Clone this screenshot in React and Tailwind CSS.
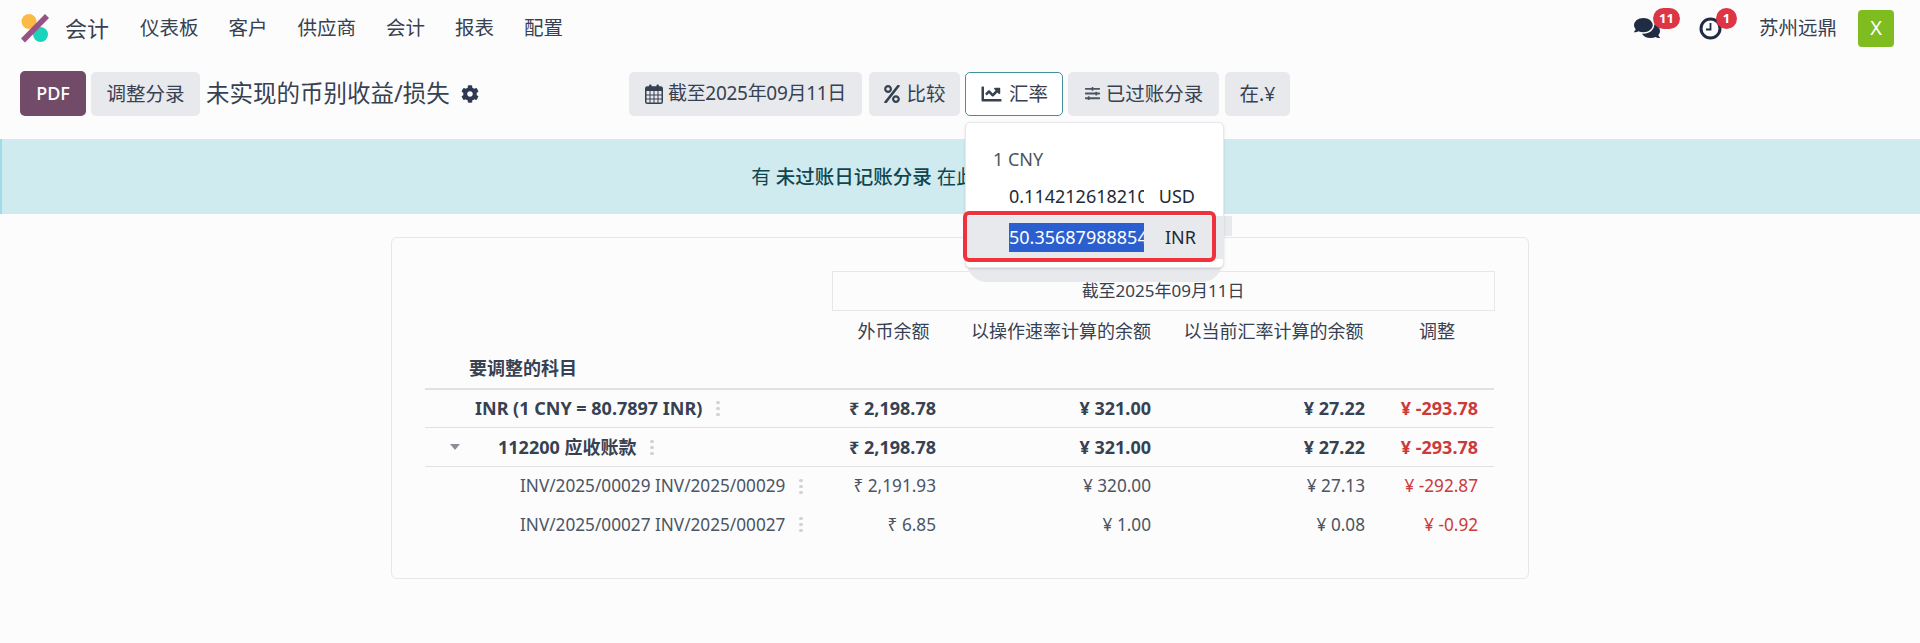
import { FaCog, FaComments, FaPercent, FaChartLine, FaSlidersH } from "react-icons/fa";

const font = { fontFamily: '"Noto Sans", "Noto Sans CJK SC", sans-serif' };

const navItems = ["仪表板", "客户", "供应商", "会计", "报表", "配置"];

const rows = [
  { label: "INR (1 CNY = 80.7897 INR)", fc: "₹ 2,198.78", op: "¥ 321.00", cur: "¥ 27.22", adj: "¥ -293.78", bold: true, pad: "pl-[50px]" },
  { label: "112200 应收账款", fc: "₹ 2,198.78", op: "¥ 321.00", cur: "¥ 27.22", adj: "¥ -293.78", bold: true, caret: true, pad: "pl-[25px]" },
  { label: "INV/2025/00029 INV/2025/00029", fc: "₹ 2,191.93", op: "¥ 320.00", cur: "¥ 27.13", adj: "¥ -292.87", pad: "pl-[95px]" },
  { label: "INV/2025/00027 INV/2025/00027", fc: "₹ 6.85", op: "¥ 1.00", cur: "¥ 0.08", adj: "¥ -0.92", pad: "pl-[95px]" },
];

function Logo() {
  return (
    <svg width="30" height="30" viewBox="0 0 30 30" className="shrink-0">
      <circle cx="9" cy="8.5" r="7.5" fill="#fbb945" />
      <circle cx="20.5" cy="21.5" r="7.5" fill="#1ad3bb" />
      <path d="M25 1 L29 5 L5 29.5 L1 25.5 Z" fill="#985184" />
    </svg>
  );
}

function CalendarIcon() {
  return (
    <svg width="18" height="20" viewBox="0 0 18 20" className="shrink-0">
      <rect x="0.75" y="3" width="16.5" height="16.25" rx="1.5" fill="none" stroke="#374151" strokeWidth="1.5" />
      <rect x="1" y="3" width="16" height="4" fill="#374151" />
      <rect x="4" y="0.5" width="2.5" height="5" rx="1" fill="#374151" />
      <rect x="11.5" y="0.5" width="2.5" height="5" rx="1" fill="#374151" />
      <path d="M1 11h16M1 15h16M5 7v12M9 7v12M13 7v12" stroke="#374151" strokeWidth="1" />
    </svg>
  );
}

function ClockIcon() {
  return (
    <svg width="23" height="23" viewBox="0 0 23 23" className="ml-[39px] shrink-0">
      <circle cx="11.5" cy="11.5" r="9.5" fill="none" stroke="#1f2c42" strokeWidth="3" />
      <path d="M11.5 6v6.5H7" fill="none" stroke="#1f2c42" strokeWidth="1.8" />
    </svg>
  );
}

function Badge({ children, className }) {
  return (
    <span className={`absolute top-[8px] flex h-[21px] items-center justify-center rounded-full bg-[#dc3545] text-[13px] font-bold text-white ${className}`}>
      {children}
    </span>
  );
}

function Kebab() {
  return (
    <span className="ml-[14px] flex flex-col gap-[3px]">
      <i className="block h-[3px] w-[4px] rounded-full bg-[#cfd2d6]" />
      <i className="block h-[3px] w-[4px] rounded-full bg-[#cfd2d6]" />
      <i className="block h-[3px] w-[4px] rounded-full bg-[#cfd2d6]" />
    </span>
  );
}

function FilterButton({ className, children }) {
  return (
    <button className={`flex h-[44px] items-center justify-center gap-[5px] rounded-[5px] bg-[#e7e9ed] text-[19.5px] text-[#374151] ${className}`}>
      {children}
    </button>
  );
}

function RatesDropdown() {
  return (
    <div className="absolute left-0 top-[50px] z-10 w-[259px]">
      <div className="absolute -bottom-[14px] left-[2px] right-[2px] h-[60px] rounded-b-[20px] bg-[#e7e9ed]" />
      <div className="absolute left-[240px] top-[94px] h-[20px] w-[27px] bg-[#e7e9ed]" />
      <div className="relative h-[146px] rounded-[5px] border border-[#e6e8eb] bg-white pt-[17px] text-[18px] shadow-sm">
        <div className="flex h-[39px] items-center pl-[27px] text-[#4b5563]">1 CNY</div>
        <div className="flex h-[36px] items-center pl-[43px] pr-[28px] text-[#1f2937]">
          <div className="w-[135px] overflow-hidden whitespace-nowrap">0.114212618210</div>
          <span className="ml-auto">USD</span>
        </div>
        <div className="-mx-px mt-[1px] flex h-[43px] items-center bg-[#e7e9ed] pl-[44px] pr-[28px] text-[#1f2937]">
          <div className="h-[29px] w-[135px] overflow-hidden whitespace-nowrap bg-[#2b5fd0] leading-[29px] text-white">50.35687988854</div>
          <span className="ml-auto">INR</span>
        </div>
        <div className="absolute -left-[3px] top-[88px] h-[51px] w-[253px] rounded-[6px] border-4 border-[#ef323d]" />
      </div>
    </div>
  );
}

export default function App() {
  return (
    <div className="h-[643px] overflow-hidden bg-[#fcfcfd] text-[#374151]" style={font}>
      <header className="flex h-[56px] items-center pl-[20px] pr-[26px]">
        <Logo />
        <span className="ml-[15px] text-[22px]">会计</span>
        <nav className="ml-[31px] flex gap-[30px] text-[19.5px]">
          {navItems.map((item, i) => (
            <span key={i}>{item}</span>
          ))}
        </nav>
        <div className="relative ml-auto flex items-center">
          <FaComments className="h-[24px] w-[26px] text-[#1f2c42]" />
          <ClockIcon />
          <span className="ml-[37px] text-[19.5px]">苏州远鼎</span>
          <span className="ml-[21px] flex h-[37px] w-[36px] items-center justify-center rounded-[4px] bg-[#7fbc1f] text-[20px] text-white">X</span>
        </div>
      </header>
      <div className="absolute left-[1653px] top-0 h-0 w-0">
        <Badge className="left-0 w-[27px]">11</Badge>
        <Badge className="left-[63px] w-[21px]">1</Badge>
      </div>

      <div className="flex pt-[15px] pb-[23px]">
        <div className="flex w-[629px] items-center pl-[20px]">
          <button className="flex h-[45px] w-[66px] items-center justify-center rounded-[5px] bg-[#714b67] text-[18px] font-medium text-white">PDF</button>
          <button className="ml-[5px] flex h-[44px] w-[109px] items-center justify-center rounded-[5px] bg-[#e7e9ed] text-[19.5px]">调整分录</button>
          <span className="ml-[6px] whitespace-nowrap text-[23.5px]">未实现的币别收益/损失</span>
          <FaCog className="ml-[11px] h-[18px] w-[18px] text-[#2f3a50]" />
        </div>
        <div className="flex items-center">
          <FilterButton className="w-[233px]">
            <CalendarIcon />
            <span className="text-[19px] tracking-[-0.3px]">截至2025年09月11日</span>
          </FilterButton>
          <FilterButton className="ml-[7px] w-[91px]">
            <FaPercent className="h-[18px] w-[18px]" />
            比较
          </FilterButton>
          <div className="relative ml-[5px]">
            <FilterButton className="w-[98px] gap-[6px] border border-[#3f919a] !bg-white">
              <FaChartLine className="h-[20px] w-[23px]" />
              汇率
            </FilterButton>
            <RatesDropdown />
          </div>
          <FilterButton className="ml-[5px] w-[151px]">
            <FaSlidersH className="h-[15px] w-[17px] text-[#4b5563]" />
            已过账分录
          </FilterButton>
          <FilterButton className="ml-[6px] w-[65px]">在.¥</FilterButton>
        </div>
      </div>

      <div className="flex h-[75px] items-center justify-center border-l-2 border-[#9fdcea] bg-[#d0ebef] text-[19.5px] text-[#0f4650]">
        <span>
          有 <span className="font-medium">未过账日记账分录</span> 在此期间之前或此期间内。
        </span>
      </div>

      <div className="mx-auto mt-[23px] h-[342px] w-[1138px] rounded-[6px] border border-[#e5e7eb] px-[33px] pt-[33px]">
        <table className="w-[1069px] table-fixed border-collapse text-[18px]">
          <colgroup>
            <col className="w-[407px]" />
            <col className="w-[123px]" />
            <col className="w-[212px]" />
            <col className="w-[213px]" />
            <col className="w-[114px]" />
          </colgroup>
          <thead>
            <tr className="h-[39px]">
              <th />
              <th colSpan={4} className="border border-[#e5e7eb] text-center text-[17px] font-normal">截至2025年09月11日</th>
            </tr>
            <tr className="h-[78px] border-b-2 border-[#dee2e6]">
              <th className="pb-[6px] pl-[44px] text-left align-bottom font-semibold">要调整的科目</th>
              <th className="pt-[7px] text-center align-top font-normal">外币余额</th>
              <th className="pt-[7px] text-center align-top font-normal">以操作速率计算的余额</th>
              <th className="pt-[7px] text-center align-top font-normal">以当前汇率计算的余额</th>
              <th className="pt-[7px] text-center align-top font-normal">调整</th>
            </tr>
          </thead>
          <tbody>
            {rows.map((row) => (
              <tr key={row.label} className={`h-[39px] ${row.bold ? "border-b border-[#dee2e6] font-bold" : "text-[17.2px] text-[#4b5563]"}`}>
                <td className={row.pad}>
                  <div className="flex items-center whitespace-nowrap">
                    {row.caret && (
                      <svg width="10" height="6" viewBox="0 0 10 6" className="mr-[38px]">
                        <polygon points="0,0 10,0 5,6" fill="#8a8f96" />
                      </svg>
                    )}
                    {row.label}
                    <Kebab />
                  </div>
                </td>
                <td className="pr-[19px] text-right">{row.fc}</td>
                <td className="pr-[16px] text-right">{row.op}</td>
                <td className="pr-[15px] text-right">{row.cur}</td>
                <td className="pr-[16px] text-right text-[#cc3a3a]">{row.adj}</td>
              </tr>
            ))}
          </tbody>
        </table>
      </div>
    </div>
  );
}
